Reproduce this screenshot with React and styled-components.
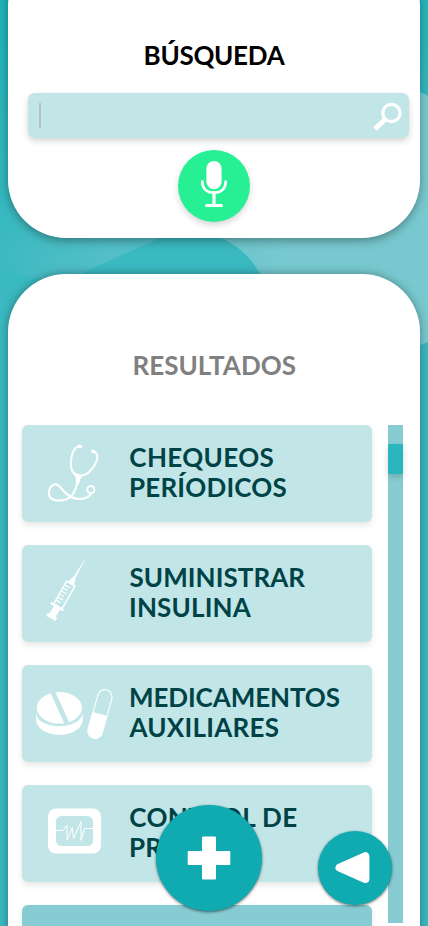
import React from "react";
import styled, { createGlobalStyle } from "styled-components";

const GlobalStyle = createGlobalStyle`
  *, *::before, *::after { box-sizing: border-box; }
  body { margin: 0; overflow: hidden; font-family: Lato, "Liberation Sans", sans-serif; }
`;

const Screen = styled.main`
  position: relative;
  width: 428px;
  height: 926px;
  overflow: hidden;
  display: flex;
  flex-direction: column;
  gap: 36px;
  padding: 0 8px;
  background: linear-gradient(170deg, #20b3b9 0, #3ab9c0 240px);
`;

const Backdrop = styled.svg`
  position: absolute;
  top: 0;
  left: 0;
`;

const Panel = styled.section`
  position: relative;
  display: flex;
  flex-direction: column;
  background: #fff;
  box-shadow: 0 3px 10px rgba(0, 0, 0, 0.34);
`;

const SearchPanel = styled(Panel)`
  flex: none;
  align-items: center;
  height: 290px;
  margin-top: -52px;
  padding-top: 92px;
  border-radius: 58px;
`;

const ResultsPanel = styled(Panel)`
  flex: none;
  height: 760px;
  padding: 76px 0 0 14px;
  border-radius: 58px;
  box-shadow: 0 0 10px rgba(0, 0, 0, 0.36);
`;

const Title = styled.h1`
  margin: 0;
  font-size: 26px;
  font-weight: 700;
  line-height: 30px;
  color: ${(p) => p.$color};
  letter-spacing: ${(p) => p.$tracking}px;
`;

const ResultsTitle = styled(Title)`
  padding-left: 110.5px;
`;

const SearchField = styled.label`
  display: flex;
  align-items: center;
  justify-content: space-between;
  width: 381px;
  height: 45px;
  margin: 23px 0 0 9px;
  padding: 0 7px 0 11px;
  border-radius: 7px;
  background: #c2e6e8;
  box-shadow: 0 3px 6px rgba(0, 0, 0, 0.17);
`;

const Caret = styled.span`
  width: 2px;
  height: 25px;
  background: #b3c2c4;
`;

const VoiceButton = styled.button`
  display: grid;
  place-items: center;
  width: 72px;
  height: 72px;
  margin-top: 12px;
  padding: 0 0 4px;
  border: 0;
  border-radius: 50%;
  background: #27f094;
  box-shadow: 0 3px 6px rgba(0, 0, 0, 0.17);
`;

const ResultsBody = styled.div`
  display: flex;
  gap: 16px;
  margin-top: 45px;
`;

const List = styled.div`
  display: flex;
  flex-direction: column;
  gap: 23px;
`;

const Row = styled.article`
  display: flex;
  width: 350px;
  height: 97px;
  border-radius: 6px;
  background: ${(p) => (p.$dim ? "#86ccd2" : "#c2e6e8")};
  box-shadow: 0 3px 6px rgba(0, 0, 0, 0.1);
`;

const RowIcon = styled.svg`
  flex: none;
  width: 106px;
  height: 97px;
`;

const RowText = styled.div`
  padding-top: 17px;
  white-space: nowrap;
`;

const Line = styled.div`
  padding-left: ${(p) => p.$inset}px;
  font-size: 26px;
  font-weight: 700;
  line-height: 30px;
  color: #004347;
  letter-spacing: ${(p) => p.$tracking}px;
`;

const Track = styled.div`
  width: 15px;
  height: 498px;
  padding-top: 19px;
  background: #86ccd2;
`;

const Thumb = styled.div`
  height: 30px;
  background: #2bb5bc;
  box-shadow: 0 3px 6px rgba(0, 0, 0, 0.17);
`;

const FloatingButton = styled.button`
  position: absolute;
  display: grid;
  place-items: center;
  padding: 0;
  border: 0;
  border-radius: 50%;
  background: #10aab1;
  box-shadow: 0 1px 3px rgba(0, 0, 0, 0.55);
`;

const AddButton = styled(FloatingButton)`
  left: 156px;
  top: 804.5px;
  width: 106px;
  height: 106px;
`;

const BackButton = styled(FloatingButton)`
  left: 318px;
  top: 831px;
  width: 74px;
  height: 74px;
`;

const Waves = () => (
  <Backdrop width="428" height="926" viewBox="0 0 428 926" aria-hidden="true">
    <defs>
      <linearGradient id="leftWave" gradientUnits="userSpaceOnUse" x1="0" y1="225" x2="100" y2="264">
        <stop offset="0" stopColor="#52bec6" stopOpacity="0" />
        <stop offset="1" stopColor="#52bec6" />
      </linearGradient>
      <linearGradient id="rightWave" gradientUnits="userSpaceOnUse" x1="225" y1="0" x2="285" y2="0">
        <stop offset="0" stopColor="#6bc4cb" />
        <stop offset="1" stopColor="#77c9cf" />
      </linearGradient>
    </defs>
    <path d="M0 200L240 200L160 238L78 275L40 279Q18 276 0 263Z" fill="url(#leftWave)" />
    <path d="M190 228C225 235 247 250 260 274L285 350H408L428 342V96Q420 91 408 88L190 200Z" fill="url(#rightWave)" />
  </Backdrop>
);

const SearchIcon = () => (
  <svg width="30" height="30" viewBox="0 0 30 30" fill="none" stroke="#fff">
    <circle cx="19.4" cy="12" r="8.6" strokeWidth="3.2" />
    <path d="M13.2 18.2L3 28" strokeWidth="5" />
  </svg>
);

const MicIcon = () => (
  <svg width="28" height="48" viewBox="0 0 28 48" fill="none" stroke="#fff" strokeWidth="2.7" strokeLinecap="round">
    <rect x="6.4" y="1" width="15.2" height="28.2" rx="7.6" fill="#fff" stroke="none" />
    <path d="M2.3 21.5C2.3 28 6.3 32.6 14 32.6S25.7 28 25.7 21.5" />
    <path d="M14 33V44.5" strokeWidth="3.2" />
    <path d="M6.5 45.5H21.5" strokeWidth="3" />
  </svg>
);

const Stethoscope = () => (
  <RowIcon viewBox="0 0 106 97" fill="none" stroke="#fff" strokeWidth="2" strokeLinecap="round" strokeLinejoin="round">
    <path d="M58 21.2C53.5 21.8 52 23.6 50.8 27.5C48.8 34 48.7 39.5 49.2 42.5C50 47 52.3 49.6 56.2 50.1C61.5 51.3 64.2 49.8 67.8 46.2C72.2 41.8 75.2 35.5 75.3 31.5C75.3 28.3 74 27.1 71 26.5" />
    <path d="M57.2 21.2L58.6 21.6M70.6 26.1L72.1 26.8" strokeWidth="3.2" />
    <path d="M52.2 48.5Q55.5 50.4 60.2 50.7L57.8 53.6L56.4 59H54.7L54.6 53.2Z" fill="#fff" strokeWidth="1.2" />
    <path d="M55.5 57C53.5 66 50 72 45.5 73.9C39 77 30.8 75.5 28.2 72.5C25.5 68.5 27 62.2 31 60C34.5 57.8 37.5 61 39.8 64C44 69.2 49 74 57.5 74C64.5 73.9 68 71.3 69.2 68.2" />
    <circle cx="68.8" cy="64.7" r="3.6" />
  </RowIcon>
);

const Syringe = () => (
  <RowIcon viewBox="0 0 106 97">
    <g transform="translate(62.8 14.5) rotate(30)" fill="none" stroke="#fff" strokeWidth="1.5">
      <path d="M-.2 0H.3L1 19L3.5 28H-3.5L-1 19Z" fill="#fff" stroke="none" />
      <rect x="-4.8" y="28" width="9.6" height="26" />
      <path d="M-4.5 32H1.5M-4.5 35.5H.5M-4.5 39H1.5M-4.5 42.5H.5M-4.5 46H1.5M-4.5 49.5H.5" strokeWidth="1.3" />
      <path d="M-8 54.8H7" strokeWidth="2" />
      <path d="M-3.5 54H3.5V64.5H5.4V68H-5.4V64.5H-3.5Z" fill="#fff" stroke="none" />
    </g>
  </RowIcon>
);

const Pills = () => (
  <RowIcon viewBox="0 0 106 97">
    <path d="M14 46.5C13.5 66 61 66 60.8 46.5V54C60 75.5 15 74.5 14 54Z" fill="#fff" />
    <ellipse cx="37.4" cy="43.2" rx="23.6" ry="17.6" fill="#c2e6e8" />
    <ellipse cx="37.4" cy="42.8" rx="22.6" ry="15.8" fill="#fff" />
    <path d="M30.3 26L45.2 59" stroke="#c2e6e8" strokeWidth="4.9" />
    <g transform="translate(78 49) rotate(16)">
      <rect x="-7.2" y="-25" width="14.4" height="50" rx="7.2" fill="none" stroke="#fff" strokeWidth="1.1" />
      <path d="M-7.7 0H7.7V17.8A7.7 7.7 0 0 1-7.7 17.8Z" fill="#fff" />
    </g>
  </RowIcon>
);

const Monitor = () => (
  <RowIcon viewBox="0 0 106 97" fill="none">
    <rect x="26" y="23.5" width="53" height="45" rx="8" fill="#fff" />
    <rect x="34" y="31" width="37" height="30" rx="5.5" fill="#c2e6e8" />
    <path d="M34 45.5H41L45 40V55.5L50.3 42.5L51.5 53.5L59 36.5V55.5L62.5 43.5H71" stroke="#fff" strokeWidth="1" />
  </RowIcon>
);

const results = [
  { Icon: Stethoscope, lines: [["CHEQUEOS", 0.38, 1.3], ["PERÍODICOS", 0.19, 1]] },
  { Icon: Syringe, lines: [["SUMINISTRAR", 0.06, 1.5], ["INSULINA", 0.18, 1]] },
  { Icon: Pills, lines: [["MEDICAMENTOS", -0.1, 1], ["AUXILIARES", 0.24, 1.5]] },
  { Icon: Monitor, lines: [["CONTROL DE", 0.36, 1.3], ["PRESIÓN", 0.1, 1]] },
];

export default function App() {
  return (
    <>
      <GlobalStyle />
      <Screen>
        <Waves />
        <SearchPanel>
          <Title $color="#000" $tracking={-0.3}>BÚSQUEDA</Title>
          <SearchField>
            <Caret />
            <SearchIcon />
          </SearchField>
          <VoiceButton aria-label="Buscar por voz">
            <MicIcon />
          </VoiceButton>
        </SearchPanel>
        <ResultsPanel>
          <ResultsTitle as="h2" $color="#808080" $tracking={0.03}>RESULTADOS</ResultsTitle>
          <ResultsBody>
            <List>
              {results.map(({ Icon, lines }) => (
                <Row key={lines[0][0]}>
                  <Icon />
                  <RowText>
                    {lines.map(([text, tracking, inset]) => (
                      <Line key={text} $tracking={tracking} $inset={inset}>{text}</Line>
                    ))}
                  </RowText>
                </Row>
              ))}
              <Row $dim />
            </List>
            <Track>
              <Thumb />
            </Track>
          </ResultsBody>
        </ResultsPanel>
        <AddButton aria-label="Añadir">
          <svg width="44" height="44" viewBox="0 0 44 44" fill="#fff">
            <rect x="15" y=".5" width="14" height="43" rx="1" />
            <rect x=".7" y="15" width="42.6" height="14" rx="1" />
          </svg>
        </AddButton>
        <BackButton aria-label="Volver">
          <svg width="44" height="40" viewBox="0 0 44 40">
            <path d="M5.3 19.4L31.2 8V30.8Z" fill="#fff" stroke="#fff" strokeWidth="8" strokeLinejoin="round" transform="translate(1.2 .2)" />
          </svg>
        </BackButton>
      </Screen>
    </>
  );
}
